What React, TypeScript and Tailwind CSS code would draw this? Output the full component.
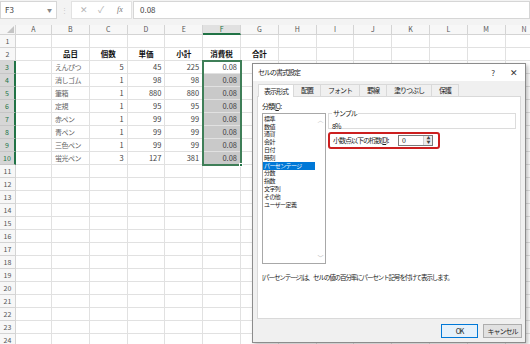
import React from "react";

const COLS = ["A", "B", "C", "D", "E", "F", "G", "H", "I", "J", "K", "L", "M", "N"];

const ITEMS: [string, number, number, number][] = [
  ["えんぴつ", 5, 45, 225],
  ["消しゴム", 1, 98, 98],
  ["筆箱", 1, 880, 880],
  ["定規", 1, 95, 95],
  ["赤ペン", 1, 99, 99],
  ["青ペン", 1, 99, 99],
  ["三色ペン", 1, 99, 99],
  ["蛍光ペン", 3, 127, 381],
];

const HEADINGS = ["", "品目", "個数", "単価", "小計", "消費税", "合計"];

const CATEGORIES = [
  "標準",
  "数値",
  "通貨",
  "会計",
  "日付",
  "時刻",
  "パーセンテージ",
  "分数",
  "指数",
  "文字列",
  "その他",
  "ユーザー定義",
];

const TABS = ["表示形式", "配置", "フォント", "罫線", "塗りつぶし", "保護"];

function FormulaBar() {
  return (
    <div className="flex h-[25px] items-start bg-[#f3f3f3] pt-[1px]">
      <div className="flex h-[18px] w-[57px] items-center justify-between border border-[#d6d6d6] bg-white pl-[4px] pr-[4px] text-[8px] text-[#444]">
        <span>F3</span>
        <span className="text-[5px] text-[#888]">▼</span>
      </div>
      <div className="flex h-[18px] w-[14px] items-center justify-center text-[7px] text-[#c8c8c8]">⋮</div>
      <div className="flex h-[18px] w-[61px] items-center border border-[#e2e2e2] bg-white pl-[8px] text-[#b5b5b5]">
        <span className="w-[18px] text-[9px]">✕</span>
        <span className="w-[19px] text-[9px]">✓</span>
        <span className="font-['Liberation_Serif',serif] text-[8px] italic text-[#777]">fx</span>
      </div>
      <div className="ml-[1px] flex h-[18px] flex-1 items-center border border-[#d6d6d6] bg-white pl-[6px] text-[8px] text-[#444]">
        0.08
      </div>
    </div>
  );
}

function HeaderRow() {
  return (
    <div className="flex h-[10px]">
      <div className="flex h-full w-[16px] shrink-0 items-end justify-end border-r border-b border-[#d4d4d4] bg-[#f5f5f5] p-[1px]">
        <svg width="7" height="7" viewBox="0 0 7 7">
          <path d="M7 0 L7 7 L0 7 Z" fill="#c4c4c4" />
        </svg>
      </div>
      {COLS.map((c) => (
        <div
          key={c}
          className={
            c === "F"
              ? "flex h-full w-[37.8px] shrink-0 items-center justify-center border-r border-b-2 border-r-[#d4d4d4] border-b-[#217346] bg-[#e1e1e1] text-[7px] text-[#217346]"
              : c === "A"
                ? "flex h-full w-[36px] shrink-0 items-center justify-center border-r border-b border-[#d4d4d4] bg-[#f7f7f7] text-[7px] text-[#555]"
                : "flex h-full w-[37.8px] shrink-0 items-center justify-center border-r border-b border-[#d4d4d4] bg-[#f7f7f7] text-[7px] text-[#555]"
          }
        >
          {c}
        </div>
      ))}
    </div>
  );
}

function SheetRow({ n }: { n: number }) {
  const item = n >= 3 && n <= 10 ? ITEMS[n - 3] : null;
  const selected = item !== null;

  const cell = (i: number): { text: string; align: string; bold?: boolean } => {
    if (n === 2 && i >= 1 && i <= 6) return { text: HEADINGS[i], align: "center", bold: true };
    if (item) {
      if (i === 1) return { text: item[0], align: "left" };
      if (i === 2) return { text: String(item[1]), align: "right" };
      if (i === 3) return { text: String(item[2]), align: "right" };
      if (i === 4) return { text: String(item[3]), align: "right" };
      if (i === 5) return { text: "0.08", align: "right" };
    }
    return { text: "", align: "left" };
  };

  return (
    <div className="flex h-[13px]">
      <div
        className={
          selected
            ? "flex h-full w-[16px] shrink-0 items-center justify-center border-r-2 border-b border-r-[#217346] border-b-[#c6c6c6] bg-[#d6d6d6] text-[7px] text-[#217346]"
            : "flex h-full w-[16px] shrink-0 items-center justify-center border-r border-b border-[#d4d4d4] bg-[#f7f7f7] text-[7px] text-[#555]"
        }
      >
        {n}
      </div>
      {COLS.map((c, i) => {
        const { text, align, bold } = cell(i);
        const grey = c === "F" && n >= 4 && n <= 10;
        return (
          <div
            key={c}
            className={[
              "flex h-full shrink-0 items-center overflow-hidden whitespace-nowrap border-r border-b border-[#e1e1e1] px-[3px]",
              i === 0 ? "w-[36px]" : "w-[37.8px]",
              grey ? "bg-[#c9c9c9]" : "bg-white",
              align === "right" ? "justify-end" : align === "center" ? "justify-center" : "justify-start",
              bold
                ? "text-[7.5px] font-bold text-[#111]"
                : i === 1
                  ? "text-[7px] tracking-[-0.5px] text-[#666]"
                  : "text-[7.5px] text-[#444]",
            ].join(" ")}
          >
            {text}
          </div>
        );
      })}
    </div>
  );
}

function Sheet() {
  const rows = Array.from({ length: 24 }, (_, i) => i + 1);
  return (
    <div className="relative">
      <HeaderRow />
      {rows.map((n) => (
        <SheetRow key={n} n={n} />
      ))}
      {/* selection F3:F10 */}
      <div className="pointer-events-none absolute left-[202px] top-[35px] h-[106px] w-[40px] border-2 border-[#3f7f58]">
        <div className="absolute -right-[3px] -bottom-[3px] h-[4px] w-[4px] border border-white bg-[#217346]" />
      </div>
    </div>
  );
}

function FormatDialog() {
  return (
    <div className="absolute left-[252px] top-[63px] flex h-[280px] w-[274px] flex-col border border-[#8c8c8c] bg-[#f0f0f0] text-[7px] tracking-[-1px] text-[#222] shadow-[2px_2px_4px_rgba(0,0,0,0.25)]">
      {/* title */}
      <div className="flex h-[17px] shrink-0 items-center justify-between bg-white pl-[5px] pr-[8px]">
        <span>セルの書式設定</span>
        <div className="flex items-center gap-[16px] text-[8px] text-[#333]">
          <span>?</span>
          <span className="text-[9px]">✕</span>
        </div>
      </div>

      {/* tabs */}
      <div className="mt-[3px] flex h-[12px] shrink-0 items-end pl-[5px]">
        {TABS.map((t, i) => (
          <div
            key={t}
            className={
              i === 0
                ? "relative z-10 -mb-px flex h-[13px] items-center border border-b-0 border-[#d9d9d9] bg-white px-[5px]"
                : "flex h-[12px] items-center border-t border-r border-[#d9d9d9] px-[7px]"
            }
          >
            {t}
          </div>
        ))}
      </div>

      {/* panel */}
      <div className="mx-[4px] flex h-[223px] shrink-0 flex-col border border-[#d9d9d9] bg-white px-[4px] pt-[4px]">
        <div className="flex gap-[2px]">
          <div className="flex w-[64px] flex-col">
            <div className="h-[12px]">
              分類(<span className="underline">C</span>):
            </div>
            <div className="flex h-[151px] border border-[#a8a8a8] bg-white">
              <div className="flex flex-1 flex-col pt-[1px] text-[6px] tracking-[-0.6px]">
                {CATEGORIES.map((c) => (
                  <div
                    key={c}
                    className={
                      c === "パーセンテージ"
                        ? "flex h-[7.8px] items-center overflow-hidden bg-[#0078d7] pl-[1px] leading-none text-white"
                        : "flex h-[7.8px] items-center overflow-hidden pl-[1px] leading-none"
                    }
                  >
                    {c}
                  </div>
                ))}
              </div>
              <div className="flex w-[10px] flex-col items-center justify-between py-[1px] text-[6px] text-[#bbb]">
                <span>︿</span>
                <span>﹀</span>
              </div>
            </div>
          </div>

          <div className="flex flex-1 flex-col pt-[7px]">
            <fieldset className="h-[21px] border border-[#dcdcdc] px-[3px]">
              <legend className="px-[1px] text-[7px]">サンプル</legend>
              <div className="mt-[2px]">8%</div>
            </fieldset>
            <div className="mt-[3px] flex h-[17px] w-[112px] items-center justify-between rounded-[3px] border-2 border-[#cc1f1f] pl-[3px] pr-[5px]">
              <span>
                小数点以下の桁数(<span className="underline">D</span>):
              </span>
              <div className="flex h-[11px] w-[35px] items-center justify-between border border-[#7a7a7a] bg-white pl-[3px]">
                <span>0</span>
                <div className="flex h-full w-[9px] flex-col border-l border-[#cfcfcf] bg-[#ececec] text-[4px] leading-[5px] text-[#444]">
                  <span className="flex h-1/2 items-center justify-center">▲</span>
                  <span className="flex h-1/2 items-center justify-center">▼</span>
                </div>
              </div>
            </div>
          </div>
        </div>

        <div className="mt-[9px] text-[6.5px] tracking-[-1.1px]">
          [パーセンテージ] は、セルの値の百分率にパーセント記号を付けて表示します。
        </div>
      </div>

      {/* buttons */}
      <div className="mt-[5px] flex justify-end gap-[5px] pr-[3px]">
        <div className="flex h-[14px] w-[37px] items-center justify-center border border-[#0078d7] bg-[#e5f1fb]">
          OK
        </div>
        <div className="flex h-[14px] w-[39px] items-center justify-center border border-[#adadad] bg-[#e1e1e1]">
          キャンセル
        </div>
      </div>
    </div>
  );
}

export default function App() {
  return (
    <div className="relative h-[344px] w-[530px] overflow-hidden bg-white font-['Noto_Sans_CJK_JP','Noto_Sans',sans-serif] text-[#333]">
      <FormulaBar />
      <Sheet />
      <FormatDialog />
    </div>
  );
}
